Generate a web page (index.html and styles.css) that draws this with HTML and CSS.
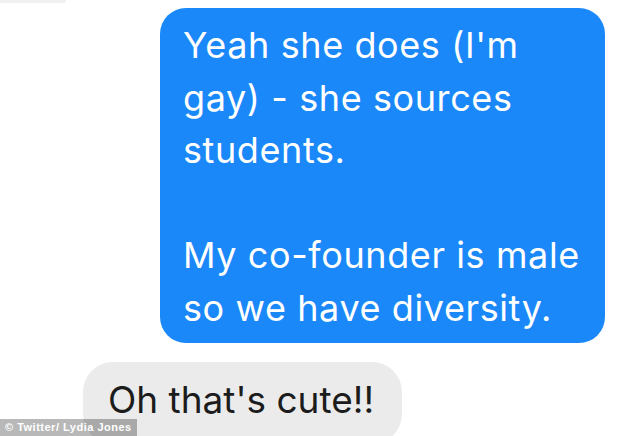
FILE: index.html
```html
<!DOCTYPE html>
<html lang="en">
<head>
    <meta charset="UTF-8">
    <meta name="viewport" content="width=device-width, initial-scale=1.0">
    <title>Messages</title>
    <link rel="stylesheet" href="styles.css">
</head>
<body>
    <div class="thread">
        <div class="prev-bubble"></div>
        <div class="bubble sent">
            Yeah she does (I'm<br>
            gay) - she sources<br>
            students.<br>
            <br>
            My co-founder is male<br>
            so we have diversity.
        </div>
        <div class="bubble received">Oh that's cute!!</div>
    </div>
    <div class="credit">© Twitter/ Lydia Jones</div>
</body>
</html>
```

FILE: styles.css
```css
body {
    margin: 0;
    width: 634px;
    height: 436px;
    overflow: hidden;
    position: relative;
    background-color: #ffffff;
    font-family: Inter, "Liberation Sans", sans-serif;
}
.thread {
    display: flex;
    flex-direction: column;
    align-items: flex-start;
}
.prev-bubble {
    width: 66px;
    height: 3px;
    background-color: #f1f1f1;
    border-radius: 0 0 14px 0;
}
.bubble {
    box-sizing: border-box;
    white-space: nowrap;
}
.sent {
    margin-top: 5px;
    margin-left: 160px;
    width: 445px;
    padding: 11px 20px 9px 23px;
    background-color: #1a88f8;
    color: #ffffff;
    font-size: 36px;
    letter-spacing: 0.6px;
    line-height: 52.5px;
    border-radius: 26px;
}
.received {
    margin-top: 19px;
    margin-left: 83px;
    width: 319px;
    padding: 14px 20px 20px 25px;
    background-color: #ebebeb;
    color: #1c1c1c;
    font-size: 37px;
    line-height: 48px;
    border-radius: 30px;
}
.credit {
    position: absolute;
    left: 0;
    bottom: 0;
    height: 17px;
    padding: 0 5px;
    background-color: rgba(0, 0, 0, 0.28);
    color: #ffffff;
    font-family: "Liberation Sans", Arial, sans-serif;
    font-size: 11px;
    font-weight: bold;
    letter-spacing: 0.5px;
    line-height: 17px;
}
```
